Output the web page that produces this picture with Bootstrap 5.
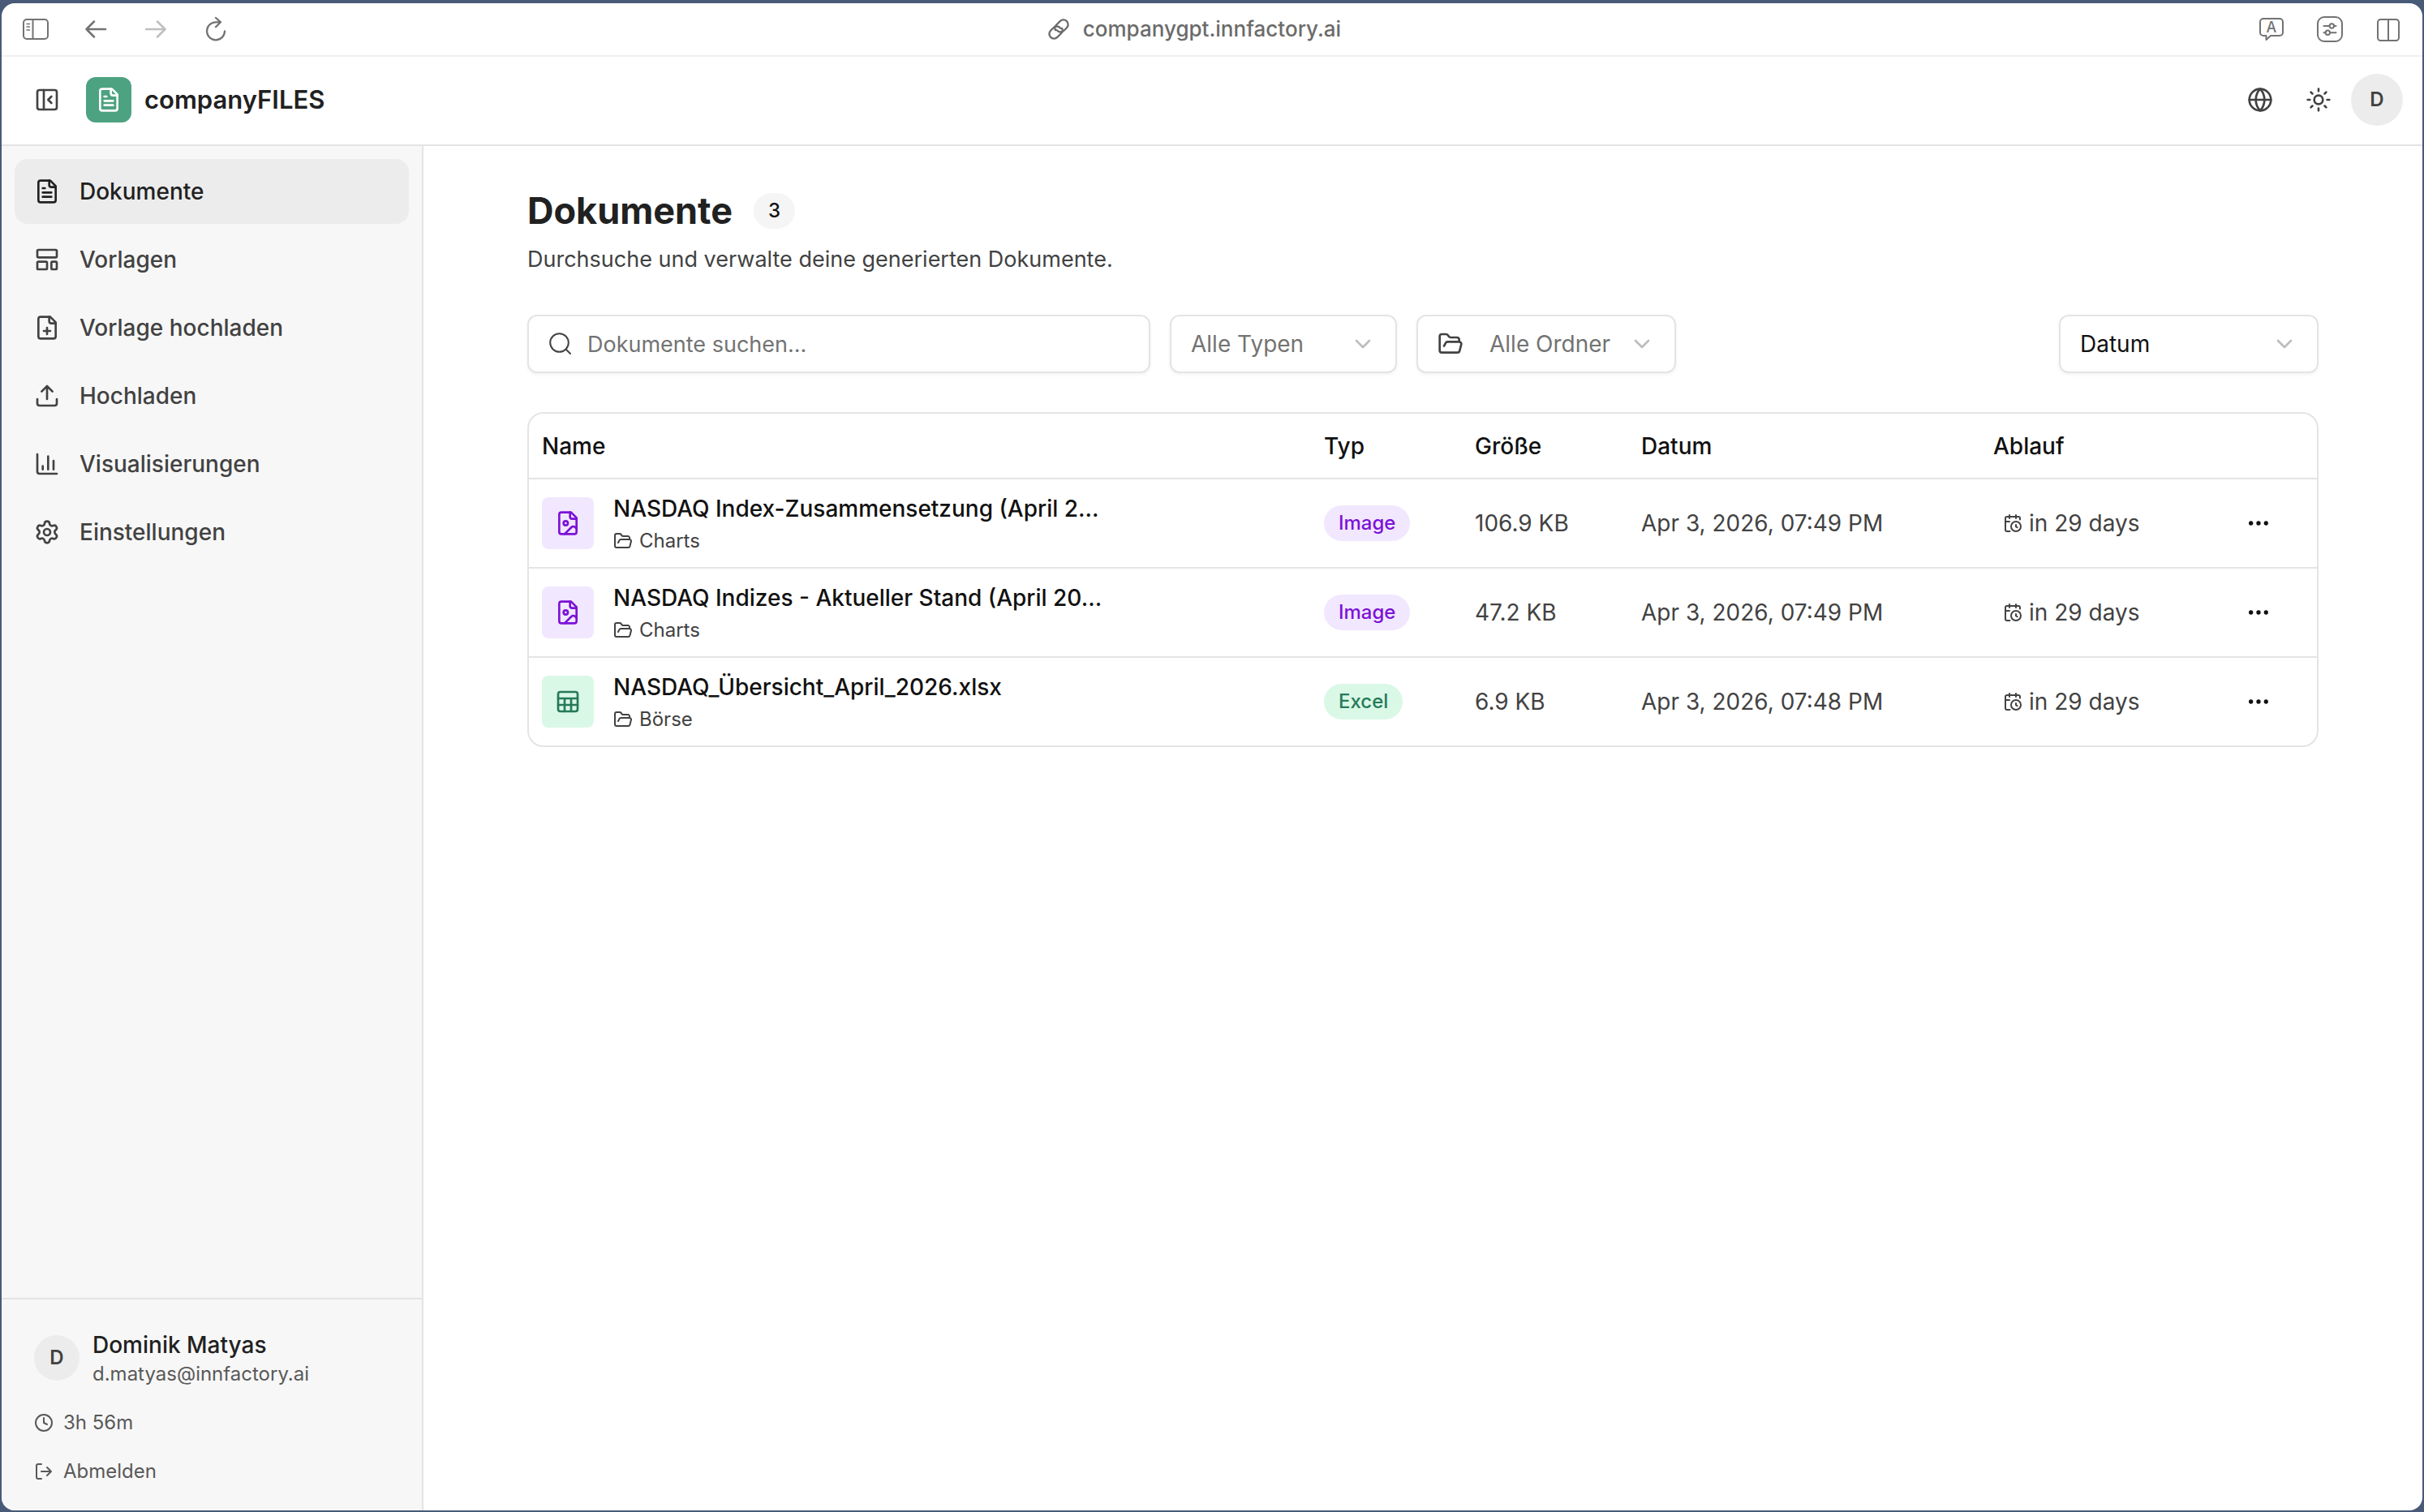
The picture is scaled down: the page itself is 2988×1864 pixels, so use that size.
<!DOCTYPE html>
<html lang="de">
<head>
<meta charset="utf-8">
<meta name="viewport" content="width=device-width, initial-scale=1">
<title>companyFILES</title>
<link rel="stylesheet" href="https://cdn.jsdelivr.net/npm/bootstrap@5.3.0/dist/css/bootstrap.min.css">
<style>
  :root { --line: #e4e4e4; --ink: #212121; --soft: #424242; --muted: #595959; }
  body { background: #485a78; font-family: Inter, "Liberation Sans", sans-serif; font-size: 28px; line-height: 40px; color: var(--ink); padding: 4px 2px 2px; }
  svg { display: block; flex-shrink: 0; }
  .ico { width: 32px; height: 32px; fill: none; stroke: currentColor; stroke-width: 2; stroke-linecap: round; stroke-linejoin: round; }
  .ico-sm { width: 24px; height: 24px; }
  .ico-link { width: 28px; height: 28px; }
  .plain { border: 0; background: none; padding: 0; color: inherit; }
  .app-window { background: #fff; border-radius: 16px; }
  .browser-bar { display: grid; grid-template-columns: 1fr auto 1fr; height: 66px; padding: 0 26px; border-bottom: 2px solid #f0f0f0; color: #737373; }
  .browser-nav { gap: 42px; }
  .browser-tools { gap: 40px; }
  .address { gap: 16px; padding-right: 44px; font-size: 26px; font-weight: 500; color: #6b6b6b; }
  .app-header { height: 110px; padding: 0 24px 2px 40px; border-bottom: 2px solid var(--line); color: var(--soft); }
  .logo-tile { width: 56px; height: 56px; border-radius: 12px; background: #4ca281; color: #fff; margin-left: 32px; }
  .brand-name { font-size: 31px; font-weight: 600; color: var(--ink); margin: 0 0 0 16px; }
  .header-tools { gap: 40px; margin-right: 24px; }
  .avatar { width: 64px; height: 64px; border-radius: 50%; background: #ececec; color: var(--soft); font-size: 24px; font-weight: 600; flex-shrink: 0; }
  .avatar-sm { width: 56px; height: 56px; }
  .side { width: 520px; background: #f7f7f7; border-right: 2px solid var(--line); flex-shrink: 0; }
  .side-nav { padding: 16px; gap: 4px; }
  .side-nav .nav-link { display: flex; align-items: center; gap: 24px; height: 80px; padding: 0 24px; border-radius: 16px; color: var(--soft); font-weight: 500; }
  .side-nav .nav-link.active { background: #ececec; color: var(--ink); }
  .side-foot { border-top: 2px solid var(--line); padding: 36px 40px 32px; color: var(--muted); font-size: 24px; line-height: 32px; }
  .user-name { font-size: 28px; line-height: 40px; font-weight: 500; color: var(--ink); }
  .foot-row { gap: 12px; margin-top: 28px; }
  .page { padding: 48px 128px; min-width: 0; }
  .page-title { font-size: 45px; line-height: 64px; font-weight: 700; margin: 0; }
  .pill { display: inline-block; border-radius: 22px; padding: 0 18px; font-size: 24px; line-height: 44px; font-weight: 500; vertical-align: middle; }
  .pill-count { background: #f5f5f5; color: #111; margin-left: 26px; }
  .violet { background: #f1e7fe; color: #7c12d6; }
  .mint { background: #daf8e6; color: #267a58; }
  .page-sub { font-size: 27px; margin: 8px 0 48px; color: var(--soft); }
  .toolbar-row { gap: 24px; margin-bottom: 48px; }
  .field-box { position: relative; }
  .field-box > svg { position: absolute; left: 26px; top: 20px; color: var(--soft); pointer-events: none; }
  .field-search { width: 768px; }
  .form-control, .form-select { height: 72px; padding: 0 24px; font-size: 28px; line-height: 40px; border: 2px solid var(--line); border-radius: 12px; box-shadow: 0 2px 4px rgba(0,0,0,.05); color: #737373; }
  .form-control { padding-left: 72px; font-size: 27px; }
  .form-control::placeholder { color: #737373; }
  .form-select { background-image: url("data:image/svg+xml,%3Csvg xmlns='http://www.w3.org/2000/svg' viewBox='0 0 24 24' fill='none' stroke='%23bdbdbd' stroke-width='2' stroke-linecap='round' stroke-linejoin='round'%3E%3Cpath d='m6 9 6 6 6-6'/%3E%3C/svg%3E"); background-size: 32px 32px; background-position: right 24px center; }
  .sel-type { width: 280px; }
  .sel-wide { width: 320px; }
  .sel-folder { padding-left: 88px; }
  .sel-sort { color: #111; }
  .doc-frame { border: 2px solid var(--line); border-radius: 20px; overflow: hidden; }
  .doc-table { table-layout: fixed; margin: 0; color: var(--soft); --bs-table-bg: transparent; }
  .doc-table > :not(caption) > * > * { padding: 0 16px; border-bottom: 2px solid var(--line); color: inherit; vertical-align: middle; }
  .doc-table > thead > tr > th { height: 80px; font-weight: 500; color: #111; }
  .doc-table > tbody > tr > td { height: 110px; }
  .doc-table > tbody > tr:last-child > td { height: 109px; border-bottom: 0; }
  .col-kind { width: 186px; } .col-size { width: 205px; } .col-date { width: 434px; } .col-end { width: 295px; } .col-act { width: 120px; }
  .file-tile { width: 64px; height: 64px; border-radius: 8px; flex-shrink: 0; }
  .file-name { line-height: 44px; font-weight: 500; color: #111; }
  .file-folder { font-size: 24px; line-height: 36px; gap: 8px; }
  .expiry { gap: 8px; padding-left: 12px; }
  .act-btn { width: 64px; height: 64px; color: #111; }
</style>
<script src="https://cdn.jsdelivr.net/npm/bootstrap@5.3.0/dist/js/bootstrap.bundle.min.js"></script>
</head>
<body class="vh-100 d-flex flex-column">
<svg class="d-none" aria-hidden="true">
  <symbol id="i-file" viewBox="0 0 24 24"><path d="M15 2H6a2 2 0 0 0-2 2v16a2 2 0 0 0 2 2h12a2 2 0 0 0 2-2V7Z"/><path d="M14 2v4a2 2 0 0 0 2 2h4M10 9H8M16 13H8M16 17H8"/></symbol>
  <symbol id="i-plus" viewBox="0 0 24 24"><path d="M15 2H6a2 2 0 0 0-2 2v16a2 2 0 0 0 2 2h12a2 2 0 0 0 2-2V7Z"/><path d="M14 2v4a2 2 0 0 0 2 2h4M9 15h6M12 12v6"/></symbol>
  <symbol id="i-image" viewBox="0 0 24 24"><path d="M15 2H6a2 2 0 0 0-2 2v16a2 2 0 0 0 2 2h12a2 2 0 0 0 2-2V7Z"/><path d="M14 2v4a2 2 0 0 0 2 2h4"/><circle cx="10" cy="12" r="2"/><path d="m20 17-1.296-1.296a2.41 2.41 0 0 0-3.408 0L9 22"/></symbol>
  <symbol id="i-sheet" viewBox="0 0 24 24"><rect x="3" y="3" width="18" height="18" rx="2"/><path d="M3 9h18M3 15h18M9 9v12M15 9v12"/></symbol>
  <symbol id="i-layout" viewBox="0 0 24 24"><rect x="3" y="3" width="18" height="7" rx="1"/><rect x="3" y="14" width="9" height="7" rx="1"/><rect x="16" y="14" width="5" height="7" rx="1"/></symbol>
  <symbol id="i-upload" viewBox="0 0 24 24"><path d="M21 15v4a2 2 0 0 1-2 2H5a2 2 0 0 1-2-2v-4M17 8l-5-5-5 5M12 3v12"/></symbol>
  <symbol id="i-chart" viewBox="0 0 24 24"><path d="M3 3v16a2 2 0 0 0 2 2h16M18 17V9M13 17V5M8 17v-3"/></symbol>
  <symbol id="i-gear" viewBox="0 0 24 24"><path d="M9.671 4.136a2.34 2.34 0 0 1 4.659 0 2.34 2.34 0 0 0 3.319 1.915 2.34 2.34 0 0 1 2.33 4.033 2.34 2.34 0 0 0 0 3.831 2.34 2.34 0 0 1-2.33 4.033 2.34 2.34 0 0 0-3.319 1.915 2.34 2.34 0 0 1-4.659 0 2.34 2.34 0 0 0-3.32-1.915 2.34 2.34 0 0 1-2.33-4.033 2.34 2.34 0 0 0 0-3.831A2.34 2.34 0 0 1 6.35 6.051a2.34 2.34 0 0 0 3.319-1.915"/><circle cx="12" cy="12" r="3"/></symbol>
  <symbol id="i-folder" viewBox="0 0 24 24"><path d="m6 14 1.5-2.9A2 2 0 0 1 9.24 10H20a2 2 0 0 1 1.94 2.5l-1.54 6a2 2 0 0 1-1.95 1.5H4a2 2 0 0 1-2-2V5a2 2 0 0 1 2-2h3.9a2 2 0 0 1 1.69.9l.81 1.2a2 2 0 0 0 1.67.9H18a2 2 0 0 1 2 2v2"/></symbol>
  <symbol id="i-cal" viewBox="0 0 24 24"><path d="M16 14v2.2l1.6 1M16 2v4M21 7.5V6a2 2 0 0 0-2-2H5a2 2 0 0 0-2 2v14a2 2 0 0 0 2 2h3.5M3 10h5M8 2v4"/><circle cx="16" cy="16" r="6"/></symbol>
  <symbol id="i-dots" viewBox="0 0 24 24"><circle cx="5" cy="12" r="1"/><circle cx="12" cy="12" r="1"/><circle cx="19" cy="12" r="1"/></symbol>
</svg>

<div class="app-window flex-grow-1 d-flex flex-column overflow-hidden">
  <div class="browser-bar align-items-center">
    <div class="browser-nav d-flex">
      <button class="plain" type="button" aria-label="Seitenleiste"><svg class="ico" viewBox="0 0 32 32"><rect x="1" y="4" width="30" height="24" rx="4"/><path d="M12.500 4v24"/><path stroke-width="1.500" d="M5 9.500h3.500M5 13h3.500M5 17h3.500"/></svg></button>
      <button class="plain" type="button" aria-label="Zurück"><svg class="ico" viewBox="0 0 32 32"><path stroke-width="2.500" d="M28 16H4.500M14 6.500 4.500 16l9.500 9.500"/></svg></button>
      <button class="plain" type="button" aria-label="Vorwärts"><svg class="ico" viewBox="0 0 32 32" opacity=".45"><path stroke-width="2.500" d="M4 16h23.500M18 6.500l9.500 9.500-9.500 9.500"/></svg></button>
      <button class="plain" type="button" aria-label="Neu laden"><svg class="ico" viewBox="0 0 32 32"><path stroke-width="2.300" d="M22 7.300H16A11 11 0 1 0 27 18.500M16 2l6 5.300-6 6"/></svg></button>
    </div>
    <div class="address d-flex align-items-center"><svg class="ico ico-link" viewBox="0 0 24 24"><path d="M10 13a5 5 0 0 0 7.540.540l3-3a5 5 0 0 0-7.070-7.070l-4 4a5 5 0 0 0-1 5.500"/><path d="M14 11a5 5 0 0 0-7.540-.540l-3 3a5 5 0 0 0 7.070 7.070l4-4a5 5 0 0 0 1-5.500"/></svg><span>companygpt.innfactory.ai</span></div>
    <div class="browser-tools d-flex justify-content-end">
      <button class="plain" type="button" aria-label="Übersetzen"><svg class="ico" viewBox="0 0 32 32"><path d="M6 3h20a4 4 0 0 1 4 4v13a4 4 0 0 1-4 4H15l-5.500 5V24H6a4 4 0 0 1-4-4V7a4 4 0 0 1 4-4Z"/><text x="16" y="20" text-anchor="middle" font-size="18" font-weight="500" fill="currentColor" stroke="none">A</text></svg></button>
      <button class="plain" type="button" aria-label="Seiteneinstellungen"><svg class="ico" viewBox="0 0 32 32"><rect x="1" y="1" width="30" height="30" rx="8"/><path d="M8.500 12H15M21 12h2.500M8.500 20.300h2M16.500 20.300h7"/><circle cx="18.300" cy="12" r="2.700"/><circle cx="13.300" cy="20.300" r="2.700"/></svg></button>
      <button class="plain" type="button" aria-label="Geteilte Ansicht"><svg class="ico" viewBox="0 0 32 32"><rect x="3" y="4" width="26" height="26" rx="3.500"/><path d="M16 4v26"/></svg></button>
    </div>
  </div>

  <header class="app-header d-flex align-items-center">
    <button class="plain" type="button" aria-label="Menü einklappen"><svg class="ico" viewBox="0 0 24 24"><rect x="3" y="3" width="18" height="18" rx="2"/><path d="M9 3v18M16 15l-3-3 3-3"/></svg></button>
    <span class="logo-tile d-flex align-items-center justify-content-center"><svg class="ico"><use href="#i-file"/></svg></span>
    <p class="brand-name">companyFILES</p>
    <div class="header-tools d-flex align-items-center ms-auto">
      <button class="plain" type="button" aria-label="Sprache"><svg class="ico" viewBox="0 0 24 24"><circle cx="12" cy="12" r="10"/><path d="M12 2a14.500 14.500 0 0 0 0 20 14.500 14.500 0 0 0 0-20M2 12h20"/></svg></button>
      <button class="plain" type="button" aria-label="Design"><svg class="ico" viewBox="0 0 24 24"><circle cx="12" cy="12" r="4"/><path d="M12 2v2M12 20v2M4.930 4.930l1.410 1.410M17.660 17.660l1.410 1.410M2 12h2M20 12h2M6.340 17.660l-1.410 1.410M19.070 4.930l-1.410 1.410"/></svg></button>
    </div>
    <button class="plain avatar" type="button">D</button>
  </header>

  <div class="d-flex flex-grow-1">
    <aside class="side d-flex flex-column">
      <nav class="side-nav nav flex-column">
        <a class="nav-link active" href="#"><svg class="ico"><use href="#i-file"/></svg>Dokumente</a>
        <a class="nav-link" href="#"><svg class="ico"><use href="#i-layout"/></svg>Vorlagen</a>
        <a class="nav-link" href="#"><svg class="ico"><use href="#i-plus"/></svg>Vorlage hochladen</a>
        <a class="nav-link" href="#"><svg class="ico"><use href="#i-upload"/></svg>Hochladen</a>
        <a class="nav-link" href="#"><svg class="ico"><use href="#i-chart"/></svg>Visualisierungen</a>
        <a class="nav-link" href="#"><svg class="ico"><use href="#i-gear"/></svg>Einstellungen</a>
      </nav>
      <div class="side-foot mt-auto">
        <div class="d-flex align-items-center gap-3">
          <span class="avatar avatar-sm d-flex align-items-center justify-content-center">D</span>
          <div><div class="user-name">Dominik Matyas</div><div>d.matyas@innfactory.ai</div></div>
        </div>
        <div class="foot-row d-flex align-items-center"><svg class="ico ico-sm" viewBox="0 0 24 24"><circle cx="12" cy="12" r="10"/><path d="M12 6v6l4 2"/></svg>3h 56m</div>
        <button class="plain foot-row d-flex align-items-center" type="button"><svg class="ico ico-sm" viewBox="0 0 24 24"><path d="m16 17 5-5-5-5M21 12H9M9 21H5a2 2 0 0 1-2-2V5a2 2 0 0 1 2-2h4"/></svg>Abmelden</button>
      </div>
    </aside>

    <main class="page flex-grow-1">
      <div class="d-flex align-items-center"><h1 class="page-title">Dokumente</h1><span class="pill pill-count">3</span></div>
      <p class="page-sub">Durchsuche und verwalte deine generierten Dokumente.</p>

      <div class="toolbar-row d-flex">
        <div class="field-box field-search">
          <svg class="ico" viewBox="0 0 32 32"><circle cx="13.500" cy="14.500" r="11.300"/><path d="m22 23 5 5"/></svg>
          <input class="form-control" type="search" placeholder="Dokumente suchen..." aria-label="Dokumente suchen">
        </div>
        <select class="form-select sel-type" aria-label="Typ"><option>Alle Typen</option></select>
        <div class="field-box">
          <svg class="ico"><use href="#i-folder"/></svg>
          <select class="form-select sel-wide sel-folder" aria-label="Ordner"><option>Alle Ordner</option></select>
        </div>
        <select class="form-select sel-wide sel-sort ms-auto" aria-label="Sortierung"><option>Datum</option></select>
      </div>

      <div class="doc-frame">
        <table class="table doc-table">
          <colgroup><col><col class="col-kind"><col class="col-size"><col class="col-date"><col class="col-end"><col class="col-act"></colgroup>
          <thead><tr><th>Name</th><th>Typ</th><th>Größe</th><th>Datum</th><th>Ablauf</th><th></th></tr></thead>
          <tbody>
            <tr>
              <td><div class="d-flex align-items-center gap-4"><span class="file-tile violet d-flex align-items-center justify-content-center"><svg class="ico"><use href="#i-image"/></svg></span><div><div class="file-name">NASDAQ Index-Zusammensetzung (April 2...</div><div class="file-folder d-flex align-items-center"><svg class="ico ico-sm"><use href="#i-folder"/></svg>Charts</div></div></div></td>
              <td><span class="pill violet">Image</span></td><td>106.9 KB</td><td>Apr 3, 2026, 07:49 PM</td>
              <td><div class="expiry d-flex align-items-center"><svg class="ico ico-sm"><use href="#i-cal"/></svg>in 29 days</div></td>
              <td><button class="plain act-btn d-flex align-items-center justify-content-center" type="button" aria-label="Aktionen"><svg class="ico"><use href="#i-dots"/></svg></button></td>
            </tr>
            <tr>
              <td><div class="d-flex align-items-center gap-4"><span class="file-tile violet d-flex align-items-center justify-content-center"><svg class="ico"><use href="#i-image"/></svg></span><div><div class="file-name">NASDAQ Indizes - Aktueller Stand (April 20...</div><div class="file-folder d-flex align-items-center"><svg class="ico ico-sm"><use href="#i-folder"/></svg>Charts</div></div></div></td>
              <td><span class="pill violet">Image</span></td><td>47.2 KB</td><td>Apr 3, 2026, 07:49 PM</td>
              <td><div class="expiry d-flex align-items-center"><svg class="ico ico-sm"><use href="#i-cal"/></svg>in 29 days</div></td>
              <td><button class="plain act-btn d-flex align-items-center justify-content-center" type="button" aria-label="Aktionen"><svg class="ico"><use href="#i-dots"/></svg></button></td>
            </tr>
            <tr>
              <td><div class="d-flex align-items-center gap-4"><span class="file-tile mint d-flex align-items-center justify-content-center"><svg class="ico"><use href="#i-sheet"/></svg></span><div><div class="file-name">NASDAQ_Übersicht_April_2026.xlsx</div><div class="file-folder d-flex align-items-center"><svg class="ico ico-sm"><use href="#i-folder"/></svg>Börse</div></div></div></td>
              <td><span class="pill mint">Excel</span></td><td>6.9 KB</td><td>Apr 3, 2026, 07:48 PM</td>
              <td><div class="expiry d-flex align-items-center"><svg class="ico ico-sm"><use href="#i-cal"/></svg>in 29 days</div></td>
              <td><button class="plain act-btn d-flex align-items-center justify-content-center" type="button" aria-label="Aktionen"><svg class="ico"><use href="#i-dots"/></svg></button></td>
            </tr>
          </tbody>
        </table>
      </div>
    </main>
  </div>
</div>
</body>
</html>
